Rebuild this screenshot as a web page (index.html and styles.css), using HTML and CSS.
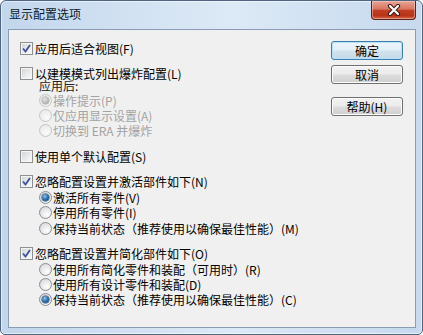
FILE: index.html
```html
<!DOCTYPE html>
<html lang="zh-CN">
<head>
<meta charset="utf-8">
<title>显示配置选项</title>
<link rel="stylesheet" href="styles.css">
</head>
<body>
<div class="window">
  <div class="titlebar">
    <div class="title">显示配置选项</div>
    <div class="close">
      <svg width="14" height="12" viewBox="0 0 14 12">
        <path d="M3 2 L11 10 M11 2 L3 10" stroke="#3b1a14" stroke-width="4.2" stroke-linecap="round"/>
        <path d="M3 2 L11 10 M11 2 L3 10" stroke="#ffffff" stroke-width="2.2" stroke-linecap="round"/>
      </svg>
    </div>
  </div>
  <div class="client">
    <div class="options">
      <div class="row cbrow first"><span class="cb on"><svg width="9" height="9" viewBox="0 0 9 9"><path d="M1 4.5 L3.5 7.5 L8 1" fill="none" stroke="#3f51a0" stroke-width="1.8"/></svg></span><span class="txt">应用后适合视图(F)</span></div>

      <div class="row cbrow short g11"><span class="cb"></span><span class="txt">以建模模式列出爆炸配置(L)</span></div>
      <div class="sublabel">应用后:</div>
      <div class="group g1">
        <div class="row rbrow dis"><span class="rb on"></span><span class="txt">操作提示(P)</span></div>
        <div class="row rbrow dis"><span class="rb"></span><span class="txt">仅应用显示设置(A)</span></div>
        <div class="row rbrow dis"><span class="rb"></span><span class="txt">切换到 ERA 并爆炸</span></div>
      </div>

      <div class="row cbrow g11"><span class="cb"></span><span class="txt">使用单个默认配置(S)</span></div>

      <div class="row cbrow g10"><span class="cb on"><svg width="9" height="9" viewBox="0 0 9 9"><path d="M1 4.5 L3.5 7.5 L8 1" fill="none" stroke="#3f51a0" stroke-width="1.8"/></svg></span><span class="txt">忽略配置设置并激活部件如下(N)</span></div>
      <div class="group g1">
        <div class="row rbrow"><span class="rb on"></span><span class="txt">激活所有零件(V)</span></div>
        <div class="row rbrow"><span class="rb"></span><span class="txt">停用所有零件(I)</span></div>
        <div class="row rbrow tall"><span class="rb"></span><span class="txt">保持当前状态（推荐使用以确保最佳性能）(M)</span></div>
      </div>

      <div class="row cbrow g9"><span class="cb on"><svg width="9" height="9" viewBox="0 0 9 9"><path d="M1 4.5 L3.5 7.5 L8 1" fill="none" stroke="#3f51a0" stroke-width="1.8"/></svg></span><span class="txt">忽略配置设置并简化部件如下(O)</span></div>
      <div class="group g0">
        <div class="row rbrow"><span class="rb"></span><span class="txt">使用所有简化零件和装配（可用时）(R)</span></div>
        <div class="row rbrow"><span class="rb"></span><span class="txt">使用所有设计零件和装配(D)</span></div>
        <div class="row rbrow"><span class="rb on"></span><span class="txt">保持当前状态（推荐使用以确保最佳性能）(C)</span></div>
      </div>
    </div>
    <div class="buttons">
      <button class="btn default">确定</button>
      <button class="btn">取消</button>
      <button class="btn help">帮助(H)</button>
    </div>
  </div>
</div>
</body>
</html>
```

FILE: styles.css
```css
html, body {
  margin: 0;
  padding: 0;
  background: #ffffff;
}
body {
  font-family: "Noto Sans CJK SC", "Liberation Sans", sans-serif;
  font-size: 12px;
  color: #000;
}
.window {
  width: 423px;
  height: 335px;
  box-sizing: border-box;
  border: 1px solid #4e6480;
  border-radius: 6px 6px 5px 5px;
  background: linear-gradient(90deg, #c2d6ec 0%, #d4e3f3 35%, #dce9f6 55%, #c6d9ee 100%);
  box-shadow: inset 0 0 0 1px rgba(255,255,255,0.55);
  display: flex;
  flex-direction: column;
  overflow: hidden;
}
.titlebar {
  height: 28px;
  display: flex;
  justify-content: space-between;
  align-items: flex-start;
  padding-left: 8px;
  padding-right: 6px;
}
.title {
  font-size: 12px;
  line-height: 14px;
  margin-top: 6px;
  color: #0b1a2c;
}
.close {
  width: 45px;
  height: 19px;
  box-sizing: border-box;
  border: 1px solid #5a2218;
  border-top: none;
  border-radius: 0 0 4px 4px;
  background: linear-gradient(180deg, #e6a595 0%, #d8755f 45%, #c23f24 52%, #b93217 80%, #d2684b 100%);
  box-shadow: inset 0 0 0 1px rgba(255,220,210,0.45);
  display: flex;
  align-items: center;
  justify-content: center;
}
.close svg { display: block; }
.client {
  flex: 1;
  margin: 0 6px 6px 7px;
  border: 1px solid #8a9cb4;
  background: #f0f0f0;
  display: flex;
  justify-content: space-between;
}
.options {
  padding-top: 11px;
  padding-left: 11px;
  display: flex;
  flex-direction: column;
}
.row {
  display: flex;
  align-items: center;
  height: 15px;
  white-space: nowrap;
}
.row.short { height: 13px; }
.row.tall { height: 17px; }
.txt { line-height: 15px; }
.cbrow .txt { margin-left: 2px; }
.rbrow .txt { margin-left: 1px; }
.g11 { margin-top: 11px; }
.g10 { margin-top: 10px; }
.g9 { margin-top: 9px; }
.g1 { margin-top: 1px; }
.g0 { margin-top: 1px; }
.group { padding-left: 19px; display: flex; flex-direction: column; }
.sublabel {
  padding-left: 19px;
  height: 12px;
  line-height: 12px;
  color: #222;
}
.cb {
  width: 13px;
  height: 13px;
  box-sizing: border-box;
  border: 1px solid #8e8f8f;
  background: linear-gradient(135deg, #cfd2d6 0%, #e9eaec 55%, #fbfbfb 100%);
  box-shadow: inset 0 0 0 1px #f6f6f6;
  display: flex;
  align-items: center;
  justify-content: center;
  flex: none;
}
.cb svg { display: block; }
.rb {
  width: 13px;
  height: 13px;
  box-sizing: border-box;
  border-radius: 50%;
  border: 1px solid #8c8e92;
  background: radial-gradient(circle at 65% 70%, #fdfdfd 0%, #e6e7e9 55%, #c9ccd1 100%);
  flex: none;
  display: flex;
  align-items: center;
  justify-content: center;
}
.rb.on::after {
  content: "";
  width: 7px;
  height: 7px;
  border-radius: 50%;
  background: radial-gradient(circle at 40% 35%, #8fc4f0 0%, #2c6aa8 50%, #0c3a6e 100%);
  box-shadow: 0 0 0 0.5px #123a66;
}
.dis { color: #a3a3a3; }
.dis .rb {
  border-color: #c4c6c9;
  background: radial-gradient(circle at 65% 70%, #fafafa 0%, #eeeeee 60%, #e0e0e0 100%);
}
.dis .rb.on::after {
  background: radial-gradient(circle at 40% 35%, #e6e6e6 0%, #b5b5b5 60%, #9c9c9c 100%);
  box-shadow: 0 0 0 0.5px #a0a0a0;
}
.buttons {
  padding-top: 11px;
  padding-right: 12px;
  display: flex;
  flex-direction: column;
  gap: 5px;
}
.btn {
  width: 72px;
  height: 19px;
  box-sizing: border-box;
  padding: 0;
  font-family: "Noto Sans CJK SC", "Liberation Sans", sans-serif;
  font-size: 12px;
  line-height: 15px;
  color: #000;
  border: 1px solid #707070;
  border-radius: 3px;
  background: linear-gradient(180deg, #f2f2f2 0%, #ebebeb 48%, #dddddd 52%, #cfcfcf 100%);
  box-shadow: inset 0 0 0 1px #fcfcfc;
}
.btn.default {
  border-color: #3c7fb1;
  box-shadow: inset 0 0 0 1px #b8e1f8;
  background: linear-gradient(180deg, #eef6fb 0%, #e3eef6 48%, #d2e3ee 52%, #c5d9e7 100%);
}
.btn.help { margin-top: 8px; }
```
